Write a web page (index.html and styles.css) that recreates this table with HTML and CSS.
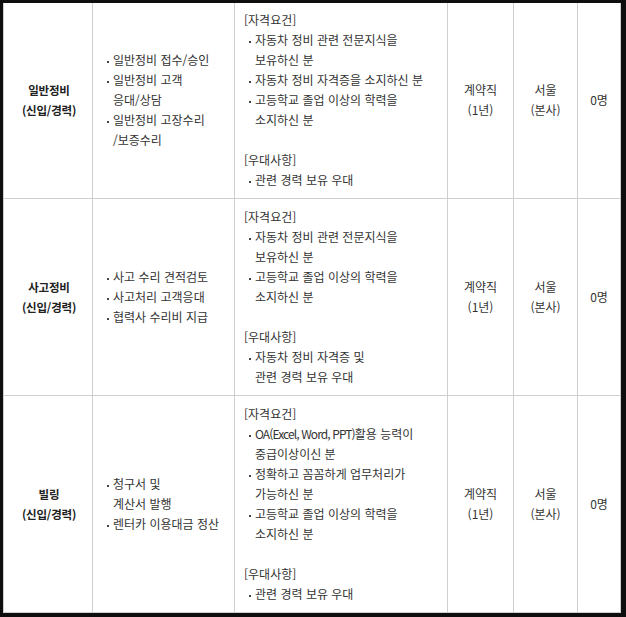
FILE: index.html
```html
<!DOCTYPE html>
<html lang="ko">
<head>
<meta charset="utf-8">
<link rel="stylesheet" href="styles.css">
</head>
<body>
<div class="frame">
<table class="jobs">
  <colgroup>
    <col class="c1"><col class="c2"><col class="c3"><col class="c4"><col class="c5"><col class="c6">
  </colgroup>
  <tbody>
    <tr class="first">
      <td class="title">일반정비<br>(신입/경력)</td>
      <td class="duty">
        <ul>
          <li>일반정비 접수/승인</li>
          <li>일반정비 고객<br>응대/상담</li>
          <li>일반정비 고장수리<br>/보증수리</li>
        </ul>
      </td>
      <td class="req">
        <p class="head">[자격요건]</p>
        <ul>
          <li>자동차 정비 관련 전문지식을<br>보유하신 분</li>
          <li>자동차 정비 자격증을 소지하신 분</li>
          <li>고등학교 졸업 이상의 학력을<br>소지하신 분</li>
        </ul>
        <p class="head gap">[우대사항]</p>
        <ul>
          <li>관련 경력 보유 우대</li>
        </ul>
      </td>
      <td class="mid">계약직<br>(1년)</td>
      <td class="mid">서울<br>(본사)</td>
      <td class="mid">0명</td>
    </tr>
    <tr>
      <td class="title">사고정비<br>(신입/경력)</td>
      <td class="duty">
        <ul>
          <li>사고 수리 견적검토</li>
          <li>사고처리 고객응대</li>
          <li>협력사 수리비 지급</li>
        </ul>
      </td>
      <td class="req">
        <p class="head">[자격요건]</p>
        <ul>
          <li>자동차 정비 관련 전문지식을<br>보유하신 분</li>
          <li>고등학교 졸업 이상의 학력을<br>소지하신 분</li>
        </ul>
        <p class="head gap">[우대사항]</p>
        <ul>
          <li>자동차 정비 자격증 및<br>관련 경력 보유 우대</li>
        </ul>
      </td>
      <td class="mid">계약직<br>(1년)</td>
      <td class="mid">서울<br>(본사)</td>
      <td class="mid">0명</td>
    </tr>
    <tr>
      <td class="title">빌링<br>(신입/경력)</td>
      <td class="duty">
        <ul>
          <li>청구서 및<br>계산서 발행</li>
          <li>렌터카 이용대금 정산</li>
        </ul>
      </td>
      <td class="req">
        <p class="head">[자격요건]</p>
        <ul>
          <li><span class="latin">OA(Excel, Word, PPT)</span>활용 능력이<br>중급이상이신 분</li>
          <li>정확하고 꼼꼼하게 업무처리가<br>가능하신 분</li>
          <li>고등학교 졸업 이상의 학력을<br>소지하신 분</li>
        </ul>
        <p class="head gap">[우대사항]</p>
        <ul>
          <li>관련 경력 보유 우대</li>
        </ul>
      </td>
      <td class="mid">계약직<br>(1년)</td>
      <td class="mid">서울<br>(본사)</td>
      <td class="mid">0명</td>
    </tr>
  </tbody>
</table>
</div>
</body>
</html>
```

FILE: styles.css
```css
html, body {
  margin: 0;
  padding: 0;
  background: #0e0e0e;
}

.frame {
  width: 626px;
  height: 617px;
  box-sizing: border-box;
  padding: 3px 5px 0 3px;
  overflow: hidden;
}

.jobs {
  width: 618px;
  table-layout: fixed;
  border-collapse: collapse;
  background: #fff;
  font-family: "Noto Sans CJK KR", "Noto Sans", sans-serif;
  font-size: 12px;
  line-height: 20px;
  color: #333;
  letter-spacing: 0;
}

.c1 { width: 89px; }
.c2 { width: 142px; }
.c3 { width: 213px; }
.c4 { width: 66px; }
.c5 { width: 64px; }
.c6 { width: 43px; }

.jobs td {
  border: 1px solid #cfcfcf;
  padding: 8px 0;
  vertical-align: middle;
  white-space: nowrap;
}

.jobs tr.first td {
  border-top: none;
  padding-top: 7px;
}

.title {
  text-align: center;
  font-size: 11.5px;
  font-weight: bold;
  color: #222;
  letter-spacing: -0.2px;
  padding-left: 2px !important;
}

.mid {
  text-align: center;
}

.duty {
  padding-left: 14px !important;
}

.req {
  padding-left: 9px !important;
}

ul {
  list-style: none;
  margin: 0;
  padding: 0;
}

.duty li {
  padding-left: 6px;
  text-indent: -6px;
}

.req li {
  margin-left: 5px;
  padding-left: 6px;
  text-indent: -6px;
}

li::before {
  content: "";
  display: inline-block;
  width: 2px;
  height: 2px;
  background: #444;
  vertical-align: middle;
  margin-right: 4px;
}

.head {
  margin: 0;
}

.head.gap {
  margin-top: 20px;
}

.latin {
  letter-spacing: -0.9px;
}
```
